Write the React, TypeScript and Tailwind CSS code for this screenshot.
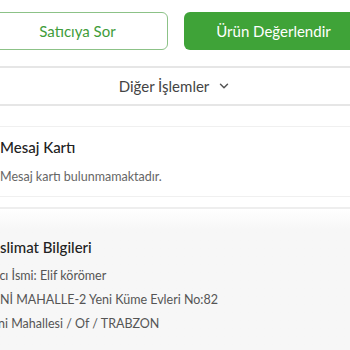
import { ChevronDown } from 'lucide-react';

export default function App() {
  return (
    <div className="w-[350px] h-[350px] overflow-hidden bg-white font-['Lato','Noto_Sans',sans-serif] text-[#333]">
      <div className="-mx-[13px] pt-3 pb-4 flex gap-4 border-b-2 border-[#e6e6e6]">
        <button type="button" className="flex-1 h-[38px] rounded-md border border-[#8cc287] text-[#3f9d3a] text-[15px]">
          Satıcıya Sor
        </button>
        <button type="button" className="flex-1 h-[38px] rounded-md bg-[#3fa338] text-white text-[15px]">
          Ürün Değerlendir
        </button>
      </div>

      <div className="h-[38px] flex items-center justify-center gap-2 border-b-2 border-[#e6e6e6] text-[15px] text-[#444]">
        <span>Diğer İşlemler</span>
        <ChevronDown className="size-3.5 text-[#555]" strokeWidth={2.5} />
      </div>

      <div className="mt-5 border-y border-[#f0f0f0] pt-[10px] pb-[9px]">
        <h3 className="text-[15px] leading-5 font-medium text-[#222]">Mesaj Kartı</h3>
        <p className="mt-[10px] text-[12.5px] leading-5 text-[#666]">Mesaj kartı bulunmamaktadır.</p>
      </div>

      <div className="mt-[10px] -ml-[15px] border-t-2 border-[#eeeeee] bg-linear-to-b from-white to-[#f7f7f7] to-[20px] pt-[28px] pb-4">
        <h3 className="text-[15px] leading-5 font-medium text-[#222]">Teslimat Bilgileri</h3>
        <div className="mt-[7px] text-[12.5px] leading-6 text-[#555]">
          <p>Alıcı İsmi: Elif körömer</p>
          <p>YENİ MAHALLE-2 Yeni Küme Evleri No:82</p>
          <p>Yeni Mahallesi / Of / TRABZON</p>
        </div>
      </div>
    </div>
  );
}
